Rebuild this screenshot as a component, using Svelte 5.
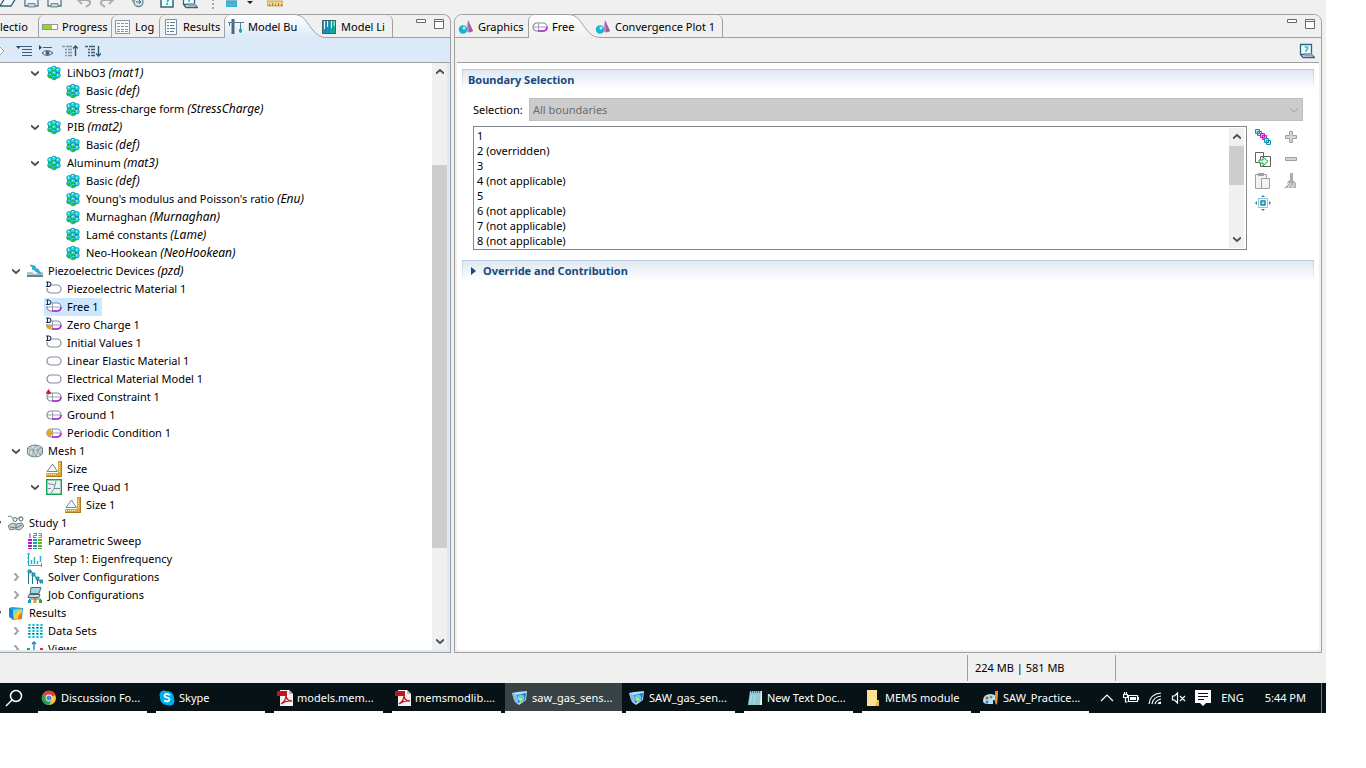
<script lang="ts">
  type Node = { depth: number; icon: string; label: string; tag?: string; state?: string };

  let selected = $state("Free 1");

  const tree: Node[] = [
    { depth: 2, icon: "material", label: "LiNbO3", tag: "mat1", state: "open" },
    { depth: 3, icon: "material", label: "Basic", tag: "def" },
    { depth: 3, icon: "material", label: "Stress-charge form", tag: "StressCharge" },
    { depth: 2, icon: "material", label: "PIB", tag: "mat2", state: "open" },
    { depth: 3, icon: "material", label: "Basic", tag: "def" },
    { depth: 2, icon: "material", label: "Aluminum", tag: "mat3", state: "open" },
    { depth: 3, icon: "material", label: "Basic", tag: "def" },
    { depth: 3, icon: "material", label: "Young's modulus and Poisson's ratio", tag: "Enu" },
    { depth: 3, icon: "material", label: "Murnaghan", tag: "Murnaghan" },
    { depth: 3, icon: "material", label: "Lamé constants", tag: "Lame" },
    { depth: 3, icon: "material", label: "Neo-Hookean", tag: "NeoHookean" },
    { depth: 1, icon: "piezo", label: "Piezoelectric Devices", tag: "pzd", state: "open" },
    { depth: 2, icon: "domain-d", label: "Piezoelectric Material 1" },
    { depth: 2, icon: "boundary-d", label: "Free 1" },
    { depth: 2, icon: "boundary-charge", label: "Zero Charge 1" },
    { depth: 2, icon: "domain-d", label: "Initial Values 1" },
    { depth: 2, icon: "domain", label: "Linear Elastic Material 1" },
    { depth: 2, icon: "domain", label: "Electrical Material Model 1" },
    { depth: 2, icon: "boundary-fixed", label: "Fixed Constraint 1" },
    { depth: 2, icon: "boundary", label: "Ground 1" },
    { depth: 2, icon: "boundary-periodic", label: "Periodic Condition 1" },
    { depth: 1, icon: "mesh", label: "Mesh 1", state: "open" },
    { depth: 2, icon: "size", label: "Size" },
    { depth: 2, icon: "quad", label: "Free Quad 1", state: "open" },
    { depth: 3, icon: "size", label: "Size 1" },
    { depth: 0, icon: "study", label: "Study 1", state: "open" },
    { depth: 1, icon: "sweep", label: "Parametric Sweep" },
    { depth: 1, icon: "eigen", label: "\u00a0\u00a0Step 1: Eigenfrequency" },
    { depth: 1, icon: "solver", label: "Solver Configurations", state: "closed" },
    { depth: 1, icon: "job", label: "Job Configurations", state: "closed" },
    { depth: 0, icon: "results", label: "Results", state: "open" },
    { depth: 1, icon: "datasets", label: "Data Sets", state: "closed" },
    { depth: 1, icon: "views", label: "Views", state: "closed" },
  ];

  const boundaries = [
    "1",
    "2 (overridden)",
    "3",
    "4 (not applicable)",
    "5",
    "6 (not applicable)",
    "7 (not applicable)",
    "8 (not applicable)",
  ];

  const tasks = [
    { icon: "chrome", label: "Discussion Fo..." },
    { icon: "skype", label: "Skype" },
    { icon: "pdf", label: "models.mem..." },
    { icon: "pdf", label: "memsmodlib...." },
    { icon: "comsol", label: "saw_gas_sens...", active: true },
    { icon: "comsol", label: "SAW_gas_sen..." },
    { icon: "notepad", label: "New Text Doc..." },
    { icon: "folder", label: "MEMS module" },
    { icon: "paint", label: "SAW_Practice..." },
  ];

  const toolGroups = [["open", "save", "saveas"], ["undo", "redo"], ["refresh"], ["help", "helpdoc"]];
  const treeTools = ["forward", "collapse", "show", "moveup", "movedown"];
  const selectionTools = ["chain", "plus", "copy", "minus", "paste", "brush", "zoomsel"];
</script>

{#snippet icon(name: string)}
  <svg class="icon" viewBox="0 0 16 16" aria-hidden="true">
    {#if name === "material"}
      <path d="M8 1l6 3v8l-6 3-6-3V4z" fill="#0f9cb0" />
      <g fill="#2fdbe8" stroke="#0f8498" stroke-width=".6">
        {#each [[4, 5], [8, 3.5], [12, 5], [4, 10.5], [8, 12.5], [12, 10.5], [8, 8]] as [x, y]}
          <circle cx={x} cy={y} r="2.4" />
        {/each}
      </g>
      <path d="M3 4h1v1H3zM7 7h1v1H7zM11 9h1v1h-1zM7 2h1v1H7zM11 4h1v1h-1z" fill="#d4fdff" />
      <path d="M2 10h3v2H2zM7 12h3v2H7zM3 7h2v1H3zM7 9h2v1H7zM6 5h1v2H6z" fill="#1ec41c" />
    {:else if name === "piezo"}
      <path d="M0 9h5l3 2 4-2h4v3H0z" fill="#b4c6ce" />
      <path d="M0 12h16v2H0z" fill="#64818e" />
      <path d="M3 2l5 1 1 3 2 0 3 5-6-3 0-1-3-1 1-1z" fill="#16b7e8" stroke="#0e8fc5" stroke-width=".6" />
    {:else if name.startsWith("domain") || name.startsWith("boundary")}
      <rect x="1" y="4" width="14" height="8" rx="4" fill="#fff" stroke="#858ba0" stroke-width="1.2" />
      {#if name.startsWith("boundary")}
        <path d="M1 8h13M6.500 4v8" stroke="#9a9fb0" fill="none" />
        <path d="M6 12h5.500q3.500-.5 3.500-4" stroke="#ae20dc" stroke-width="1.600" fill="none" />
      {/if}
      {#if name.endsWith("-d") || name === "boundary-charge"}
        <path d="M0 0h6v7H0z" fill="#fff" fill-opacity=".9" />
        <path d="M0 1h3q2 .3 2 2.200T3 5.500H0M1.500 1v4.500" fill="none" stroke="#1d2d52" stroke-width="1.200" />
      {/if}
      {#if name === "boundary-charge"}
        <path d="M0 8h6q0 4-3 4T0 8z" fill="#e6a817" />
      {:else if name === "boundary-periodic"}
        <circle cx="3.500" cy="8" r="3" fill="#e6a817" />
      {:else if name === "boundary-fixed"}
        <path d="M0 4.500l2.500-4L5 4.500z" fill="#d0141c" stroke="#d0141c" stroke-width=".6" />
      {/if}
    {:else if name === "mesh"}
      <path d="M.5 5v6q3 3 7.500 3t7.500-3V5Q13 2 8 2T.5 5z" fill="#d5dede" stroke="#6e8588" />
      <path d="M.5 5q7 5 15 0M3 3l3 4 3-5 2 5 3-4M3 7l-1 4 4 3V7l3 6 2-6 2 5 2-5" fill="none" stroke="#7f999c" stroke-width=".8" />
    {:else if name === "size"}
      <path d="M1 10.500L6.500 3l5 7.500z" fill="#f2f6f6" stroke="#728b90" />
      <path d="M0 12h12V0h4v16H0z" fill="#d5a63c" />
      <path d="M1 13.500h1M3 13.500h1M5 13.500h1M7 13.500h1M9 13.500h1M13 2.500h1M13 4.500h1M13 6.500h1M13 8.500h1M13 10.500h1" stroke="#fff0ac" />
      <path d="M0 15.500h15.500V0" fill="none" stroke="#a97c1c" />
    {:else if name === "quad"}
      <rect x=".7" y=".7" width="14.600" height="14.600" fill="#eef1f4" stroke="#12a051" stroke-width="1.400" />
      <path d="M2 4.500l7 1.500 1-4M9 6l-1 3.500h6M8 9.500l-3 5M2 9.500h3" stroke="#79909b" fill="none" />
    {:else if name === "study"}
      <path d="M0 1.500q3-2 5 2l2 2m2-1q2-4 6-2" fill="none" stroke="#70838b" />
      <circle cx="7" cy="4.500" r="2" fill="#fff" stroke="#526970" />
      <circle cx="13" cy="4" r="2" fill="#fff" stroke="#526970" />
      <path d="M0 11l4-3 4 1 6-1 2 3-4 4-5-1-5 1z" fill="#c6d0d3" stroke="#526970" stroke-width=".8" />
      <path d="M2 12l6 1 6-3M8 9v4" fill="none" stroke="#526970" stroke-width=".8" />
    {:else if name === "sweep"}
      <g fill="none">
        <path d="M3 6v10" stroke="#b01bbb" stroke-width="4" stroke-dasharray="2 1" />
        <path d="M8 6v10" stroke="#189fb7" stroke-width="4" stroke-dasharray="2 1" />
        <path d="M13 6v10" stroke="#62b622" stroke-width="4" stroke-dasharray="2 1" />
      </g>
      <path d="M2 1h1v4" fill="none" stroke="#b01bbb" />
      <path d="M6.500.5h3v2h-3v2h3" fill="none" stroke="#189fb7" />
      <path d="M11.500.5h3v4h-3m0-2h3" fill="none" stroke="#62b622" />
    {:else if name === "eigen"}
      <path d="M1.500 2v12.500H15M0 3h3M0 7h1M0 11h1M14.500 12v4" fill="none" stroke="#16b5c7" />
      <path d="M4.500 13V9M7.500 13V6M10.500 13v-3M13.500 11V5" stroke="#20b8ca" stroke-width="1.500" />
    {:else if name === "solver"}
      <path d="M1.500 2v13M5.500 5v10M10.500 9v6M1 2h3l3 4 3 4 4 3" fill="none" stroke="#19758a" />
      <path d="M1 1h3v3H1zM5 4h3v3H5zM9 8h3v3H9zM13 11h3v3h-3z" fill="#28b0c9" stroke="#19758a" stroke-width=".7" />
    {:else if name === "job"}
      <path d="M4 .5h10l-2 6H3z" fill="#9fd8de" stroke="#496d75" />
      <path d="M2 7.500h11l-1 3H1z" fill="#d0d6d8" stroke="#496d75" />
      <path d="M2.500 14v-2h11v2M8 10v3" stroke="#496d75" fill="none" />
      <path d="M1 13h3v3H1z" fill="#159bc0" /><path d="M6.500 13h3v3h-3z" fill="#e99c0b" /><path d="M12 13h3v3h-3z" fill="#18af50" />
    {:else if name === "results"}
      <path d="M1 3l3-1 11 1-1 11-9 1-4-3z" fill="#2aa4de" />
      <path d="M5 5l9-1-1 10H6z" fill="#f8cf38" />
      <path d="M5 12l6-8-6 1z" fill="#5fdcf0" /><path d="M10 14q0-5 4-6l-1 6z" fill="#f0701c" />
      <path d="M1 3l4 2v9l-4-3z" fill="#1584cc" />
    {:else if name === "datasets"}
      <path d="M2.500 1v14M6.500 1v14M10.500 1v14M14.500 1v14" stroke="#17b9cb" stroke-width="2.200" stroke-dasharray="2 1" />
      <path d="M1 4.500h14M1 10.500h14" stroke="#146c7b" stroke-dasharray="2 2" />
    {:else if name === "views"}
      <path d="M7 12V1M5 3l2-2 2 2" stroke="#197ed0" fill="none" stroke-width="1.300" />
      <path d="M0 7h3v3H0z" fill="#24b52e" /><path d="M13 7h3v3h-3z" fill="#e03b18" />
    {:else if name === "progress"}
      <rect x=".5" y="5.500" width="15" height="5" fill="#fff" stroke="#8a9aa0" />
      <path d="M1 6h9v4H1z" fill="#91cc12" /><path d="M3 6v4M6 6v4M9 6v4" stroke="#c9ec58" stroke-width=".6" />
    {:else if name === "log"}
      <path d="M.5 1.500h14v13H.5z" fill="#fafafa" stroke="#7f97ad" />
      <path d="M2 4.500h12M2 7.500h12M2 10.500h12M2 12.500h12" stroke="#8096a8" stroke-dasharray="3 1" />
    {:else if name === "report"}
      <path d="M2.500.5h11v15h-11z" fill="#fafafa" stroke="#7893a8" />
      <path d="M4 3.500h2M4 6.500h2M4 9.500h2M4 12.500h2M7 3.500h5M7 6.500h4M7 9.500h5M7 12.500h4" stroke="#547d9a" />
    {:else if name === "builder"}
      <path d="M5 0v15" stroke="#486b7d" stroke-width="3" /><path d="M0 3.500h16M1.500 3v4M12.500 4v6" stroke="#577d91" fill="none" />
      <path d="M11 10h3v3l-1.500 1-1.500-1z" fill="#16a6d8" />
    {:else if name === "library"}
      <path d="M1 1h7v14H1z" fill="#1594cb" /><path d="M8 1h7v14H8z" fill="#13b4a4" />
      <path d="M1.500 1.500h13v13h-13z" fill="none" stroke="#415e6a" /><path d="M3.500 2v8M6.500 2v6M10.500 2v7M13 2v5" stroke="#def7f6" stroke-width="1.200" /><path d="M5 1v14M8.500 1v14M12 1v14" stroke="#315c70" stroke-width=".7" />
    {:else if name === "graphics"}
      <path d="M10 1l5 11q-4 3-7 0z" fill="#c98fc6" /><path d="M10 1l1 12q3 0 4-1z" fill="#a2609f" />
      <circle cx="5" cy="10.500" r="4.200" fill="#16b4d2" /><circle cx="6" cy="9" r="1.500" fill="#b9f2fb" />
    {:else if name === "open"}
      <path d="M0 13L5 5h11l-5 8z" fill="#f1f6f8" stroke="#316579" stroke-width="1.300" />
    {:else if name === "save" || name === "saveas"}
      <path d="M2 1h13v12H2z" fill="#f2f5f6" stroke="#527788" stroke-width="1.300" /><path d="M5 10.500h7V14H5z" fill="#c5d3da" stroke="#527788" stroke-width=".8" />
    {:else if name === "undo"}
      <path d="M6 3L2 7l4 4M2 7h8q5 0 4 4l-4 3" fill="none" stroke="#a3adb2" stroke-width="1.800" />
    {:else if name === "redo"}
      <path d="M10 3l4 4-4 4M14 7H6Q1 7 2 11l4 3" fill="none" stroke="#a3adb2" stroke-width="1.800" />
    {:else if name === "refresh"}
      <path d="M1 4h9v6H5z" fill="#c4d3db" stroke="#6c8797" /><circle cx="9.500" cy="9" r="4.500" fill="#dce5ea" stroke="#6c8797" stroke-width="1.300" /><path d="M7 9h5l-2-2m2 2l-2 2" fill="none" stroke="#426a80" />
    {:else if name === "help"}
      <path d="M2 1h12v13H2z" fill="#f3fbfc" stroke="#2f6a7c" stroke-width="1.500" /><path d="M6 5q4-3 4 1L8 9M8 10v2" fill="none" stroke="#12bfd0" stroke-width="1.800" />
    {:else if name === "helpdoc"}
      <path d="M1.500 1.500h11v10h-11zM2 12l2 2.500h11.500l-3-3" fill="#f2fdfe" stroke="#32647a" stroke-width="1.300" />
      <path d="M5 10h7l3 3.500H6z" fill="#8fa2ad" /><path d="M5.500 4h3v2L7 7.500V9" fill="none" stroke="#13cbd7" stroke-width="1.600" />
    {:else if name === "clean"}
      <path d="M2 7h11v7H2z" fill="#2fb1dc" /><path d="M2 7.500h11M2 4.500h11v3M4 10v3M7 10v3M10 10v3" fill="none" stroke="#8fb4c2" /><path d="M6 0h3v4H6z" fill="#8a9ca4" />
    {:else if name === "measure"}
      <path d="M0 8h16v5H0z" fill="#f3d27c" stroke="#a17b24" stroke-width=".6" /><path d="M2.500 13v-2M5.500 13v-3M8.500 13v-2M11.500 13v-3M14.500 13v-2" stroke="#a8812c" />
    {:else if name === "forward"}
      <path d="M1 6h5V3l5 5-5 5v-3H1z" fill="#f7f7f7" stroke="#a1a7a8" />
    {:else if name === "collapse"}
      <path d="M0 3h5L2.500 6z" fill="#1a477a" /><path d="M3 3.500h13M6 6.500h10M6 9.500h10M6 12.500h10" stroke="#42606d" stroke-width="1.200" />
    {:else if name === "show"}
      <path d="M0 2l3 2.500L0 7z" fill="#1a477a" /><path d="M4 4.500h9M3 10q5-5 11 0-6 5-11 0z" fill="none" stroke="#42606d" /><circle cx="8.500" cy="10" r="2" fill="#42606d" />
    {:else if name === "moveup" || name === "movedown"}
      <path d="M0 3.500h3M4 3.500h6M3 6.500h2M6 6.500h4M3 9.500h2M6 9.500h4M3 12.500h2M6 12.500h4" stroke={name === "moveup" ? "#8c9397" : "#42606d"} stroke-width="1.300" />
      <path d={name === "moveup" ? "M13.500 13V3M11 5.500L13.500 3 16 5.500" : "M13.500 3v10M11 10.500l2.500 2.500L16 10.500"} fill="none" stroke="#2d5c78" stroke-width="1.400" />
    {:else if name === "chain"}
      <path d="M.5.5h4v4h-4zM2.500 2.500h4v4h-4z" fill="#a8e8ef" stroke="#1591b0" /><path d="M5.500 4.500h4v4h-4zM7.500 6.500h4v4h-4z" fill="#f58bea" stroke="#cc1fb8" /><path d="M9.500 9.500h4v4h-4zM11.500 11.500h4v4h-4z" fill="#a8e8ef" stroke="#1591b0" />
    {:else if name === "plus"}
      <path d="M6.500 2.500h3v4h4v3h-4v4h-3v-4h-4v-3h4z" fill="#d5d5d5" stroke="#a0a0a0" />
    {:else if name === "minus"}
      <path d="M2.500 6.500h11v3h-11z" fill="#d5d5d5" stroke="#a0a0a0" />
    {:else if name === "copy"}
      <path d="M.5 1.500h8v10h-8zM5.500 5.500h10v10h-10z" fill="#fff" stroke="#606060" /><path d="M4 9h4V6l5 4.500-5 4.500v-3H4z" fill="#dff9e6" stroke="#14a342" />
    {:else if name === "paste"}
      <path d="M.5 1.500h11v14H.5z" fill="#f2f2f2" stroke="#a0a0a0" /><path d="M3 0h6v3H3z" fill="#a0a0a0" /><path d="M6.500 5.500h8v10h-8z" fill="#f3f3f3" stroke="#a0a0a0" />
    {:else if name === "brush"}
      <path d="M7 0h3v7l3 3v5H4l-3 0 3-3 1-4 2-1z" fill="#adadad" /><path d="M2 14l4-4M5 15l3-5M9 15v-3M11 10v4" stroke="#f0f0f0" />
    {:else if name === "zoomsel"}
      <path d="M8 0l2 2H6zM8 16l2-2H6zM0 8l2-2v4zM16 8l-2-2v4z" fill="#148eb0" /><path d="M3.500 3.500h9v9h-9z" fill="none" stroke="#487d8b" stroke-dasharray="1 1" /><path d="M6 6h4v4H6z" fill="#9ceafa" stroke="#0b90b3" stroke-width="1.500" />
    {:else if name === "chrome"}
      <circle cx="8" cy="8" r="7" fill="#fbc72c" /><path d="M8 8L2 4a7 7 0 0 1 12.500 1z" fill="#e34133" /><path d="M8 8L2 4a7 7 0 0 0 6 11l3-5z" fill="#28a24b" /><circle cx="8" cy="8" r="3.400" fill="#fff" /><circle cx="8" cy="8" r="2.600" fill="#4587ec" />
    {:else if name === "skype"}
      <circle cx="5" cy="5" r="4.500" fill="#00aef0" /><circle cx="11" cy="11" r="4.500" fill="#00aef0" /><circle cx="8" cy="8" r="7" fill="#00aef0" /><path d="M11 5Q6 2.500 5.500 5.500 5.500 7 8 7.500t2.500 2.200Q10 12.500 5 10.500" fill="none" stroke="#fff" stroke-width="1.700" />
    {:else if name === "pdf"}
      <path d="M3 0h9l4 4v12H3z" fill="#f4f0f0" /><path d="M12 0v4h4z" fill="#c8b5b5" /><path d="M0 1h10v5H0z" fill="#bb1621" /><path d="M4 14q5-3 5-9 0 6 6 6-6-1-11 3" fill="none" stroke="#c01520" stroke-width="1.300" />
    {:else if name === "comsol"}
      <path d="M0 3l5-1 10-1-1 9-7 5-4-3z" fill="#b6dcf6" /><path d="M5 5l9-2-1 7-7 3z" fill="#1f6fd0" /><circle cx="9" cy="8" r="3.400" fill="#4fd2e6" /><path d="M7 7l4 2-3 3z" fill="#d8e84a" /><path d="M0 3l5 2 1 9-4-4z" fill="#7cc0ee" />
    {:else if name === "notepad"}
      <path d="M3 1h12v14H3z" fill="#faf3c7" /><path d="M3 1h11l-1 14H1z" fill="#91cbd8" /><path d="M4 2h10" stroke="#536c75" stroke-width="2" stroke-dasharray="1 1" /><path d="M5 5l-2 8M8 5l-1 8" stroke="#b8e3eb" />
    {:else if name === "folder"}
      <path d="M2 0h10v10h2v6H2z" fill="#fce193" /><path d="M12 10h2v6h-4z" fill="#e5bd55" />
    {:else if name === "paint"}
      <path d="M0 11q0-7 8-7 7 1 6 7l-4-1v4H5q-5 0-5-3z" fill="#bbe0f5" /><circle cx="4" cy="8" r="1.500" fill="#e53e36" /><circle cx="8" cy="7" r="1.500" fill="#45ae34" /><circle cx="4" cy="12" r="1.500" fill="#2382d2" /><path d="M12 1h3v4l-1 10-2-2z" fill="#e58b2b" />
    {/if}
  </svg>
{/snippet}

{#snippet chevron(dir: string)}
  <svg class="chevron {dir}" viewBox="0 0 8 8" aria-hidden="true"><path d="M0 2.500L4 6 8 2.500" /></svg>
{/snippet}

{#snippet scrollbar(kind: string)}
  <div class="scrollbar {kind}" aria-hidden="true">
    <span class="arrow">{@render chevron("up")}</span>
    <span class="before"></span>
    <span class="thumb"></span>
    <span class="after"></span>
    <span class="arrow">{@render chevron("down")}</span>
  </div>
{/snippet}

{#snippet swoosh(id: string, bottom: string)}
  <svg class="swoosh" viewBox="0 0 36 24" aria-hidden="true">
    <linearGradient {id} x1="0" y1="0" x2="0" y2="1">
      <stop offset="0" stop-color="#fff" />
      <stop offset="1" stop-color={bottom} />
    </linearGradient>
    <path d="M0 0h3C13 0 16 9 21 15S29 23 36 23.500V24H0z" fill="url(#{id})" />
    <path d="M0 .5h3C13 .5 16 9 21 15S29 23.500 36 23.500" fill="none" stroke="#a0a0a0" />
  </svg>
{/snippet}

{#snippet windowButtons()}
  <div class="window-buttons">
    <button aria-label="Minimize"><svg viewBox="0 0 12 12"><path d="M1.500 1.500h9v3h-9z" /></svg></button>
    <button aria-label="Maximize"><svg viewBox="0 0 12 12"><path d="M1.500 1.500h9v9h-9zM1.500 3.500h9" /></svg></button>
  </div>
{/snippet}

<div class="app">
  <div class="main-toolbar" role="toolbar" aria-label="Main">
    {#each toolGroups as group}
      <div class="group">
        {#each group as name}
          <button aria-label={name}>{@render icon(name)}</button>
        {/each}
      </div>
    {/each}
    <span class="grip"></span>
    <div class="group">
      <button aria-label="clean">{@render icon("clean")}</button>
      <span class="caret"></span>
      <button aria-label="measure">{@render icon("measure")}</button>
    </div>
  </div>

  <main class="workspace">
    <section class="pane left">
      <div class="tabs" role="tablist">
        <button class="tab first" role="tab">lectio</button>
        <button class="tab progress" role="tab">{@render icon("progress")}<span>Progress</span></button>
        <button class="tab log" role="tab">{@render icon("log")}<span>Log</span></button>
        <button class="tab results" role="tab">{@render icon("report")}<span>Results</span></button>
        <button class="tab builder active" role="tab" aria-selected="true">
          {@render swoosh("left-tab", "#dbe9f8")}
          {@render icon("builder")}<span>Model Bu</span>
        </button>
        <button class="tab last" role="tab">{@render icon("library")}<span>Model Li</span></button>
        {@render windowButtons()}
      </div>

      <div class="pane-toolbar">
        {#each treeTools as name}
          <button aria-label={name}>{@render icon(name)}</button>
        {/each}
      </div>

      <div class="tree-area">
        <div class="tree" role="tree">
          {#each tree as node}
            <div class="row" style="padding-left: {node.depth * 19}px">
              <span class="twisty">
                {#if node.state}
                  {@render chevron(node.state === "open" ? "down" : "right")}
                {/if}
              </span>
              <button
                class="node"
                class:selected={node.label === selected}
                role="treeitem"
                aria-selected={node.label === selected}
                onclick={() => (selected = node.label)}
              >
                {@render icon(node.icon)}
                <span>{node.label}{#if node.tag}{" "}<i>({node.tag})</i>{/if}</span>
              </button>
            </div>
          {/each}
        </div>
        {@render scrollbar("tall")}
      </div>
    </section>

    <section class="pane right">
      <div class="tabs" role="tablist">
        <button class="tab graphics" role="tab">{@render icon("graphics")}<span>Graphics</span></button>
        <button class="tab free active" role="tab" aria-selected="true">
          {@render swoosh("right-tab", "#f0f0f0")}
          {@render icon("boundary")}<span>Free</span>
        </button>
        <button class="tab last" role="tab">{@render icon("graphics")}<span>Convergence Plot 1</span></button>
        {@render windowButtons()}
      </div>

      <div class="pane-toolbar end">
        <button aria-label="Help">{@render icon("helpdoc")}</button>
      </div>

      <div class="settings">
        <h2>Boundary Selection</h2>
        <div class="section-body">
          <div class="field">
            <label for="selection">Selection:</label>
            <div class="select">
              <select id="selection" disabled>
                <option>All boundaries</option>
              </select>
              {@render chevron("down")}
            </div>
          </div>
          <div class="boundary-row">
            <div class="listbox">
              <ul>
                {#each boundaries as boundary}
                  <li>{boundary}</li>
                {/each}
              </ul>
              {@render scrollbar("short")}
            </div>
            <div class="selection-tools">
              {#each selectionTools as name}
                <button aria-label={name}>{@render icon(name)}</button>
              {/each}
            </div>
          </div>
        </div>
        <h2><span class="triangle"></span>Override and Contribution</h2>
      </div>
    </section>
  </main>

  <div class="status">
    <span class="memory">224 MB | 581 MB</span>
  </div>

  <footer class="taskbar">
    <button class="search" aria-label="Search">
      <svg viewBox="0 0 18 18"><circle cx="11" cy="7" r="5.500" /><path d="M7 11l-6 6" /></svg>
    </button>
    {#each tasks as task}
      <button class="task" class:active={task.active}>
        {@render icon(task.icon)}
        <span>{task.label}</span>
      </button>
    {/each}
    <div class="tray">
      <svg viewBox="0 0 16 16"><path d="M2 11l6-6 6 6" /></svg>
      <svg viewBox="0 0 16 16"><path d="M5.500 5.500h9v6h-9zM15.500 7v3M1.500 2v2M3.500 2v2M.5 4.500h4v3h-4zM2.500 7v5h2" /><path class="solid" d="M7 7h6v3H7z" /></svg>
      <svg viewBox="0 0 16 16"><path d="M2 14Q3 4 14 3M5 14q1-7 9-8M8 14q1-4 6-5M11 14q1-2 3-2" /><path class="solid" d="M12 12h2v2h-2z" /></svg>
      <svg viewBox="0 0 16 16"><path d="M1.500 6v4h2l3 3V3l-3 3zM9 6l5 5M14 6l-5 5" /></svg>
      <svg viewBox="0 0 16 16"><path class="solid" d="M0 0h16v13h-5l-3 3-3-3H0z" /><path class="ink" d="M3 3.500h10M3 6.500h10M3 9.500h6" /></svg>
      <span class="lang">ENG</span>
      <time>5:44 PM</time>
      <span class="desktop"></span>
    </div>
  </footer>
</div>

<style>
  :global(body) {
    margin: 0;
    background: #fff;
  }

  .app {
    display: flex;
    flex-direction: column;
    height: calc(100vh - 55px);
    margin-right: 40px;
    overflow: hidden;
    background: #f0f0f0;
    color: #000;
    font-family: "Noto Sans", "Segoe UI", sans-serif;
    font-size: 11px;
    line-height: 18px;
  }

  button {
    display: flex;
    align-items: center;
    padding: 0;
    border: 0;
    background: none;
    color: inherit;
    font: inherit;
    white-space: nowrap;
  }

  .icon {
    display: block;
    flex: none;
    width: 16px;
    height: 16px;
  }

  .chevron {
    width: 8px;
    height: 8px;
    fill: none;
    stroke: #505050;
    stroke-width: 2;
  }

  .chevron.up {
    transform: rotate(180deg);
  }

  .chevron.right {
    transform: rotate(-90deg);
    stroke: #a6a6a6;
  }

  /* Main toolbar */
  .main-toolbar {
    display: flex;
    flex: none;
    align-items: flex-end;
    gap: 14px;
    height: 14px;
    padding-bottom: 5px;
    box-sizing: border-box;
    overflow: hidden;
  }

  .group {
    display: flex;
    align-items: flex-end;
    gap: 7px;
  }

  .grip {
    height: 14px;
    border-left: 2px dotted #a8a8a8;
    margin-right: -4px;
  }

  .caret {
    align-self: flex-end;
    border: 3px solid transparent;
    border-top-color: #222;
    margin: 0 7px 2px 0;
  }

  /* Panes */
  .workspace {
    display: grid;
    flex: 1;
    grid-template-columns: 451fr 868fr;
    gap: 3px;
    min-height: 0;
    padding-right: 4px;
  }

  .pane {
    display: flex;
    flex-direction: column;
    min-width: 0;
    min-height: 0;
    border: 1px solid #a0a0a0;
    border-radius: 8px 8px 0 0;
  }

  .pane.left {
    border-left: 0;
    border-top-left-radius: 0;
    background: #dbe9f8;
  }

  .tabs {
    display: flex;
    flex: none;
    height: 22px;
    border-bottom: 1px solid #a0a0a0;
    border-radius: 7px 7px 0 0;
    background: #f0f0f0;
  }

  .left .tabs {
    border-top-left-radius: 0;
  }

  .tab {
    position: relative;
    flex: none;
    gap: 4px;
    box-sizing: border-box;
    height: 22px;
    padding: 2px 0 0 3px;
    border-left: 1px solid #a0a0a0;
    border-top-left-radius: 6px;
  }

  .tab span {
    position: relative;
  }

  .tab.first {
    width: 38px;
    padding-left: 0;
    border: 0;
  }

  .tab.progress {
    width: 73px;
  }

  .tab.log {
    width: 48px;
  }

  .tab.results {
    width: 65px;
  }

  .tab.builder {
    width: 67px;
  }

  .tab.graphics {
    width: 73px;
    border-left: 0;
  }

  .tab.free {
    width: 37px;
  }

  .tab.active {
    z-index: 1;
    height: 23px;
    padding-top: 1px;
    background: linear-gradient(#fff, #dbe9f8);
  }

  .right .tab.active {
    background: linear-gradient(#fff, #f0f0f0);
  }

  .tab.last {
    margin-left: 27px;
    padding-right: 7px;
    border-left: 0;
    border-right: 1px solid #a0a0a0;
    border-top-right-radius: 6px;
  }

  .swoosh {
    position: absolute;
    top: -1px;
    left: 100%;
    width: 36px;
    height: 24px;
  }

  .window-buttons {
    display: flex;
    align-items: flex-start;
    gap: 6px;
    margin: 3px 5px 0 auto;
  }

  .window-buttons svg {
    width: 12px;
    height: 12px;
    fill: #fff;
    stroke: #6a6a6a;
  }

  .pane-toolbar {
    display: flex;
    flex: none;
    align-items: center;
    gap: 7px;
    height: 23px;
    padding-top: 1px;
    border-bottom: 1px solid #a0a0a0;
  }

  .left .pane-toolbar {
    margin-left: -7px;
  }

  .pane-toolbar.end {
    justify-content: flex-end;
    margin: 0 2px;
    padding-right: 4px;
  }

  /* Model tree */
  .tree-area {
    display: flex;
    flex: 1;
    min-height: 0;
    margin: 0 3px 2px 0;
    overflow: hidden;
    background: #fff;
  }

  .tree {
    flex: 1;
    min-width: 0;
    margin-left: -11px;
    padding-top: 1px;
  }

  .row {
    display: flex;
    height: 18px;
  }

  .twisty {
    display: flex;
    align-items: center;
    flex: none;
    width: 13px;
    padding-left: 4px;
  }

  .node {
    gap: 5px;
    padding: 0 3px 0 2px;
  }

  .node.selected {
    background: #cce8ff;
  }

  i {
    font-size: 12px;
  }

  .scrollbar {
    display: flex;
    flex: none;
    flex-direction: column;
    width: 15px;
    background: #f0f0f0;
  }

  .arrow {
    display: flex;
    align-items: center;
    justify-content: center;
    height: 18px;
  }

  .thumb {
    background: #cdcdcd;
  }

  .tall .before,
  .tall .after {
    flex: 84;
  }

  .tall .thumb {
    flex: 384;
  }

  .short .thumb {
    flex: 40;
  }

  .short .after {
    flex: 46;
  }

  /* Settings */
  .settings {
    flex: 1;
    margin: 0 2px 2px;
    padding: 6px 5px;
    background: #fff;
  }

  h2 {
    display: flex;
    align-items: center;
    height: 20px;
    margin: 0;
    padding-left: 5px;
    border: 1px solid #b8cade;
    border-width: 1px 1px 0;
    border-image: linear-gradient(#b8cade, #fff) 1;
    background: linear-gradient(#dfe8f2, #fff);
    color: #174a7e;
    font-size: 11px;
    font-weight: 700;
  }

  .triangle {
    margin: 0 7px 0 3px;
    border: 4px solid transparent;
    border-right-width: 0;
    border-left: 5px solid #174a7e;
  }

  .section-body {
    padding: 8px 11px 10px;
  }

  .field {
    display: flex;
    align-items: center;
    gap: 5px;
  }

  label {
    width: 51px;
    white-space: nowrap;
  }

  .select {
    position: relative;
    flex: 1;
  }

  select {
    display: block;
    width: 100%;
    height: 23px;
    padding: 0 3px;
    border: 1px solid #bfbfbf;
    border-radius: 0;
    appearance: none;
    background: #ccc;
    color: #6d6d6d;
    font: inherit;
    opacity: 1;
  }

  .select .chevron {
    position: absolute;
    top: 8px;
    right: 5px;
    stroke: #a0a0a0;
    stroke-width: 1;
  }

  .boundary-row {
    display: flex;
    gap: 8px;
    margin-top: 5px;
  }

  .listbox {
    display: flex;
    flex: 1;
    padding: 1px 2px 1px 3px;
    border: 1px solid #828790;
  }

  ul {
    flex: 1;
    margin: 0;
    padding: 0;
    list-style: none;
    line-height: 15px;
  }

  .selection-tools {
    display: grid;
    grid-template-columns: 16px 16px;
    grid-auto-rows: 16px;
    gap: 6px 12px;
    width: 48px;
    padding-top: 3px;
  }

  /* Status line and taskbar */
  .status {
    display: flex;
    flex: none;
    justify-content: flex-end;
    height: 30px;
    padding-right: 210px;
  }

  .memory {
    width: 140px;
    margin: 2px 0;
    padding-left: 7px;
    border: 1px solid #a0a0a0;
    border-width: 0 1px;
    line-height: 25px;
  }

  .taskbar {
    display: flex;
    flex: none;
    height: 30px;
    background: #071216;
    color: #fff;
  }

  .search {
    flex: none;
    width: 34px;
    padding-left: 5px;
  }

  .search svg {
    width: 18px;
    height: 18px;
    fill: none;
    stroke: #fff;
    stroke-width: 1.5;
  }

  .task {
    flex: 0 1 109px;
    gap: 4px;
    min-width: 0;
    box-sizing: border-box;
    margin: 0 5px 0 4px;
    padding: 2px 0 0 3px;
    border-bottom: 2px solid #fff;
  }

  .task.active {
    flex-basis: 117px;
    margin: 0 0 0 -1px;
    padding-left: 7px;
    background: #394346;
    background-clip: padding-box;
  }

  .tray {
    display: flex;
    align-items: center;
    gap: 8px;
    margin-left: auto;
  }

  .tray svg {
    width: 16px;
    height: 16px;
    fill: none;
    stroke: #fff;
    stroke-width: 1.2;
  }

  .tray .solid {
    fill: #fff;
    stroke: none;
  }

  .tray .ink {
    stroke: #071216;
  }

  .lang {
    margin: 0 13px 0 2px;
  }

  .desktop {
    align-self: stretch;
    width: 4px;
    margin-left: 7px;
    border-left: 1px solid #6d7476;
  }
</style>
